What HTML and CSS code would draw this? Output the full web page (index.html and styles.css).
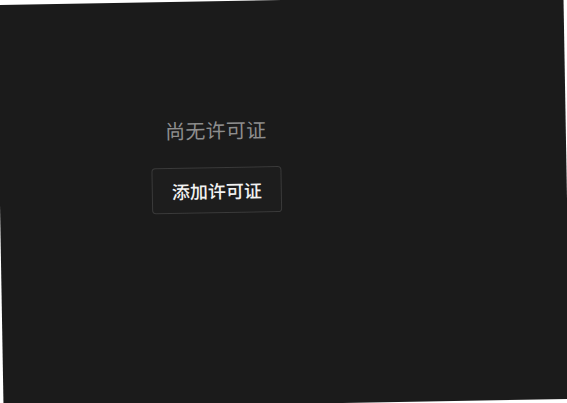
FILE: index.html
```html
<!DOCTYPE html>
<html lang="zh-CN">
<head>
<meta charset="utf-8">
<title>许可证</title>
<link rel="stylesheet" href="styles.css">
</head>
<body>
<div class="screen">
  <main class="content">
    <section class="empty">
      <p class="empty-title">尚无许可证</p>
      <button class="btn-add" type="button">添加许可证</button>
    </section>
  </main>
</div>
</body>
</html>
```

FILE: styles.css
```css
html, body {
  margin: 0;
  padding: 0;
  background: #ffffff;
  overflow: hidden;
}

body {
  width: 567px;
  height: 403px;
  font-family: "Noto Sans CJK SC", "Noto Sans", sans-serif;
}

.screen {
  width: 567px;
  height: 404px;
  background: #1b1b1b;
  display: flex;
  transform: rotate(-1deg);
  transform-origin: 50% 50%;
}

.content {
  width: 434px;
  padding-top: 115px;
}

.empty {
  display: flex;
  flex-direction: column;
  align-items: center;
}

.empty-title {
  margin: 0;
  font-size: 20px;
  line-height: 28px;
  letter-spacing: 0.3px;
  color: #8e8e8e;
}

.btn-add {
  margin-top: 23px;
  padding: 10px 19px;
  font-family: inherit;
  font-size: 18px;
  line-height: 24px;
  font-weight: 500;
  color: #f2f2f2;
  background: #1d1d1d;
  border: 1px solid #3a3a3a;
  border-radius: 4px;
}
```
